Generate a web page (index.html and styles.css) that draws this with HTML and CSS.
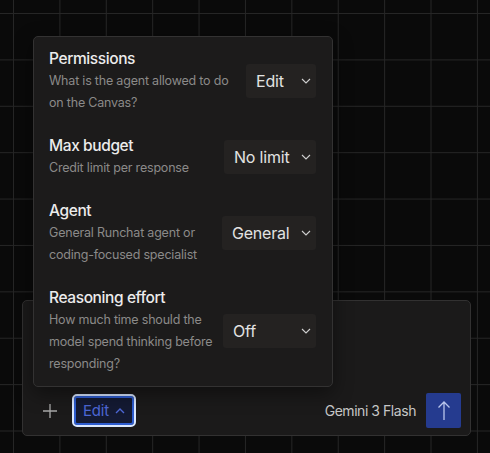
FILE: index.html
```html
<!DOCTYPE html>
<html lang="en">
<head>
<meta charset="utf-8">
<title>Runchat composer</title>
<link rel="stylesheet" href="styles.css">
</head>
<body>
<div class="canvas">
  <div class="composer">
    <div class="settings">
      <div class="setting">
        <div class="setting-text">
          <div class="setting-title">Permissions</div>
          <div class="setting-desc">What is the agent allowed to do on the Canvas?</div>
        </div>
        <div class="select select-edit">
          <span>Edit</span>
          <svg class="chev" viewBox="0 0 10 6"><path d="M1 1l4 4 4-4"/></svg>
        </div>
      </div>
      <div class="setting">
        <div class="setting-text">
          <div class="setting-title">Max budget</div>
          <div class="setting-desc">Credit limit per response</div>
        </div>
        <div class="select select-budget">
          <span>No limit</span>
          <svg class="chev" viewBox="0 0 10 6"><path d="M1 1l4 4 4-4"/></svg>
        </div>
      </div>
      <div class="setting">
        <div class="setting-text">
          <div class="setting-title">Agent</div>
          <div class="setting-desc">General Runchat agent or coding-focused specialist</div>
        </div>
        <div class="select select-agent">
          <span>General</span>
          <svg class="chev" viewBox="0 0 10 6"><path d="M1 1l4 4 4-4"/></svg>
        </div>
      </div>
      <div class="setting">
        <div class="setting-text">
          <div class="setting-title">Reasoning effort</div>
          <div class="setting-desc">How much time should the model spend thinking before responding?</div>
        </div>
        <div class="select select-effort">
          <span>Off</span>
          <svg class="chev" viewBox="0 0 10 6"><path d="M1 1l4 4 4-4"/></svg>
        </div>
      </div>
    </div>

    <div class="toolbar">
      <div class="toolbar-left">
        <button class="icon-btn" aria-label="Add">
          <svg viewBox="0 0 14 14"><path d="M7 0v14M0 7h14"/></svg>
        </button>
        <button class="mode-btn">
          <span>Edit</span>
          <svg class="chev-up" viewBox="0 0 10 6"><path d="M1 5l4-4 4 4"/></svg>
        </button>
      </div>
      <div class="toolbar-right">
        <span class="model-name">Gemini 3 Flash</span>
        <button class="send-btn" aria-label="Send">
          <svg viewBox="0 0 14 20"><path d="M7 19V1M1.5 6.5L7 1l5.5 5.5"/></svg>
        </button>
      </div>
    </div>
  </div>
</div>
</body>
</html>
```

FILE: styles.css
```css
* {
  box-sizing: border-box;
}

html, body {
  margin: 0;
  padding: 0;
}

body {
  font-family: Inter, "Noto Sans", "Liberation Sans", sans-serif;
  color: #e6e6e6;
}

/* line grid of the canvas behind the composer */
.canvas {
  width: 490px;
  height: 453px;
  overflow: hidden;
  background-color: #0a0a0a;
  background-image:
    linear-gradient(to right, #262626 1px, transparent 1px),
    linear-gradient(to bottom, #262626 1px, transparent 1px);
  background-size: 46.4px 46.4px;
  background-position: 13px 13px;
  padding: 300px 19px 0 22px;
}

.composer {
  position: relative;
  width: 449px;
  height: 136px;
  background: #1b1a1a;
  border: 1px solid #323131;
  border-radius: 5px;
  display: flex;
  flex-direction: column;
  justify-content: flex-end;
  padding: 0 9px 7px 13px;
}

/* settings popover opened from the mode button */
.settings {
  position: absolute;
  left: 10px;
  bottom: 48px;
  width: 300px;
  background: #1c1b1b;
  border: 1px solid #333232;
  border-radius: 5px;
  padding: 11px 16px 11px 15px;
  display: flex;
  flex-direction: column;
  gap: 21px;
  box-shadow: 0 6px 20px rgba(0, 0, 0, 0.45);
}

.setting {
  display: flex;
  align-items: center;
  gap: 5px;
}

.setting-text {
  flex: 1;
  min-width: 0;
}

.setting-title {
  font-size: 15.5px;
  font-weight: 500;
  line-height: 22px;
  letter-spacing: -0.4px;
  color: #ececec;
}

.setting-desc {
  font-size: 12.5px;
  line-height: 22px;
  letter-spacing: -0.2px;
  color: #8b8a89;
}

.select {
  flex: none;
  height: 34px;
  background: #242221;
  border-radius: 3px;
  display: flex;
  align-items: center;
  justify-content: space-between;
  padding: 0 5px 0 10px;
  font-size: 16px;
  letter-spacing: -0.2px;
  color: #e2e2e2;
}

.select-edit { width: 70px; }
.select-budget { width: 92px; }
.select-agent { width: 94px; }
.select-effort { width: 93px; }

.chev {
  width: 10px;
  height: 6px;
  fill: none;
  stroke: #cfcfcf;
  stroke-width: 1.1;
}

.toolbar {
  display: flex;
  align-items: center;
  justify-content: space-between;
  height: 35px;
}

.toolbar-left,
.toolbar-right {
  display: flex;
  align-items: center;
}

button {
  font-family: inherit;
  border: 0;
  background: none;
  padding: 0;
  cursor: pointer;
}

.icon-btn {
  width: 28px;
  height: 28px;
  display: flex;
  align-items: center;
  justify-content: center;
  margin-right: 8px;
}

.icon-btn svg {
  width: 14px;
  height: 14px;
  fill: none;
  stroke: #a9a9a9;
  stroke-width: 1.3;
}

.mode-btn {
  width: 64px;
  height: 33px;
  border: 2px solid #d9e7ff;
  border-radius: 5px;
  box-shadow: inset 0 0 0 2px #2d5ccf;
  background: #141a33;
  display: flex;
  align-items: center;
  padding: 0 0 0 9px;
  gap: 6px;
  font-size: 15px;
  letter-spacing: -0.2px;
  color: #4d67d6;
}

.chev-up {
  width: 10px;
  height: 6px;
  fill: none;
  stroke: #4d67d6;
  stroke-width: 1.4;
}

.model-name {
  font-size: 14px;
  letter-spacing: -0.45px;
  color: #c6c6c6;
  margin-right: 10px;
}

.send-btn {
  width: 35px;
  height: 35px;
  border-radius: 2px;
  background: #253b8f;
  display: flex;
  align-items: center;
  justify-content: center;
}

.send-btn svg {
  width: 14px;
  height: 20px;
  fill: none;
  stroke: #b9c5ec;
  stroke-width: 1.3;
}
```
